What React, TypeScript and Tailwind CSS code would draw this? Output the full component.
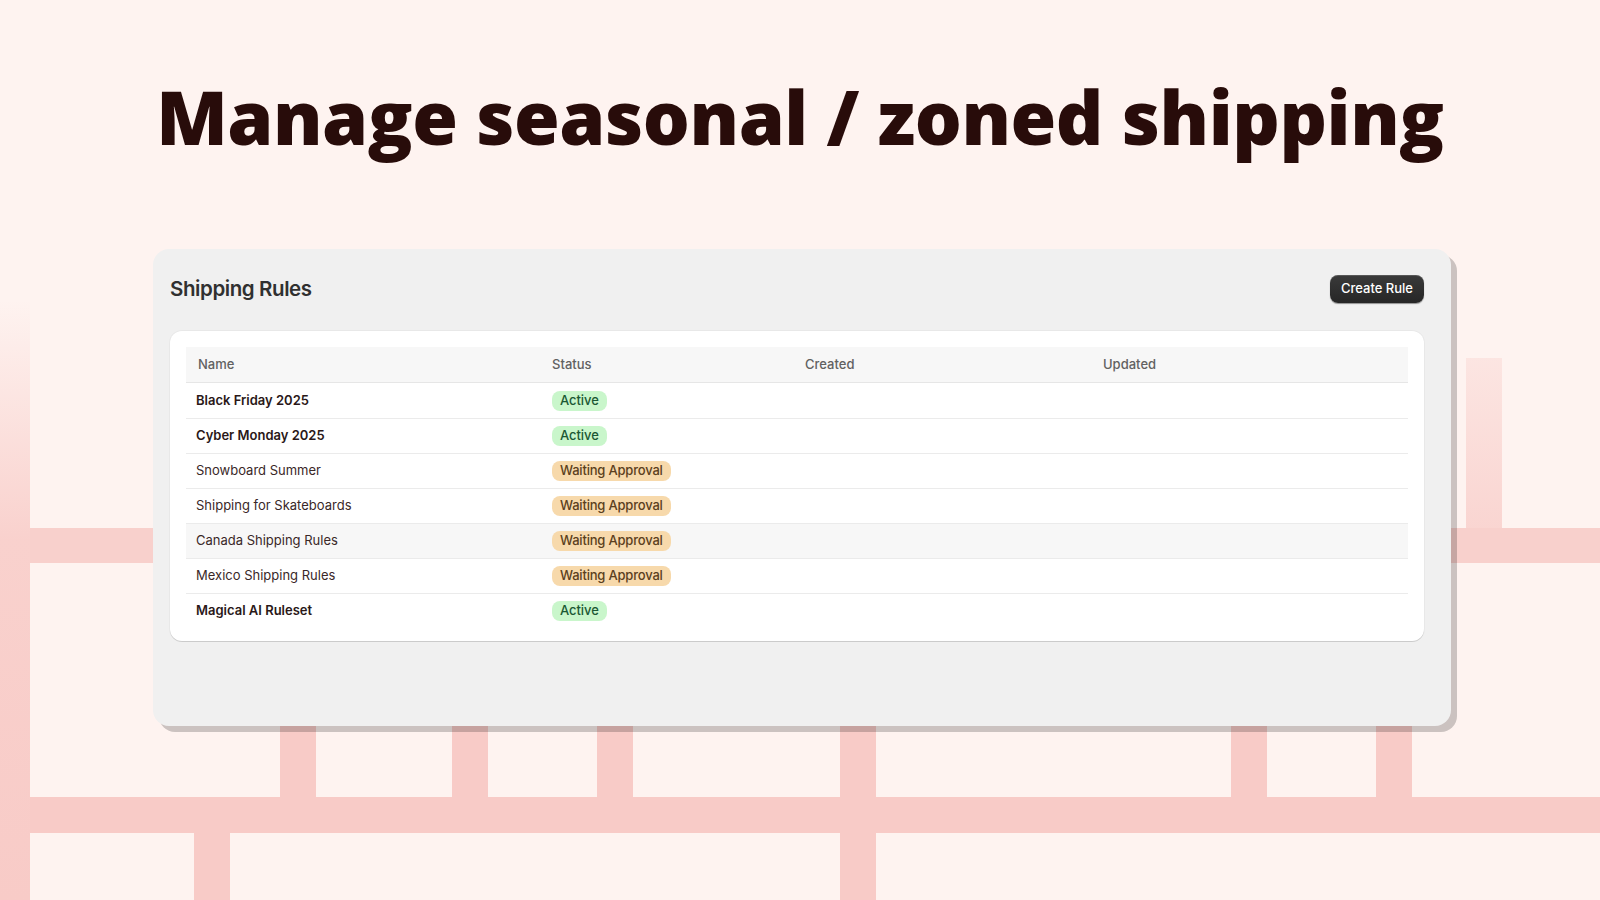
import React from "react";

type Rule = {
  name: string;
  status: "Active" | "Waiting Approval";
  bold?: boolean;
  hovered?: boolean;
};

const rules: Rule[] = [
  { name: "Black Friday 2025", status: "Active", bold: true },
  { name: "Cyber Monday 2025", status: "Active", bold: true },
  { name: "Snowboard Summer", status: "Waiting Approval" },
  { name: "Shipping for Skateboards", status: "Waiting Approval" },
  { name: "Canada Shipping Rules", status: "Waiting Approval", hovered: true },
  { name: "Mexico Shipping Rules", status: "Waiting Approval" },
  { name: "Magical AI Ruleset", status: "Active", bold: true },
];

// road-map looking stripes behind everything
function Backdrop() {
  const line = "#f8cbc7";
  const verticals = [280, 452, 597, 1231, 1376];
  return (
    <svg
      className="absolute inset-0"
      width="1600"
      height="900"
      viewBox="0 0 1600 900"
    >
      <defs>
        <linearGradient id="fadeLeft" x1="0" y1="0" x2="0" y2="1">
          <stop offset="0" stopColor={line} stopOpacity="0" />
          <stop offset="0.4" stopColor={line} stopOpacity="0.85" />
          <stop offset="1" stopColor={line} stopOpacity="1" />
        </linearGradient>
        <linearGradient id="fadeRight" x1="0" y1="0" x2="0" y2="1">
          <stop offset="0" stopColor={line} stopOpacity="0.35" />
          <stop offset="1" stopColor={line} stopOpacity="0.75" />
        </linearGradient>
      </defs>
      <rect x="0" y="300" width="30" height="600" fill="url(#fadeLeft)" />
      <rect x="30" y="528" width="1570" height="35" fill="#f8d0cc" />
      <rect x="1466" y="358" width="36" height="170" fill="url(#fadeRight)" />
      {verticals.map((x) => (
        <rect key={x} x={x} y="700" width="36" height="97" fill={line} />
      ))}
      <rect x="840" y="700" width="36" height="200" fill={line} />
      <rect x="30" y="797" width="1570" height="36" fill={line} />
      <rect x="194" y="833" width="36" height="67" fill={line} />
    </svg>
  );
}

function Badge({ status }: { status: Rule["status"] }) {
  const active = status === "Active";
  return (
    <span
      className={
        active
          ? "inline-flex h-5 items-center rounded-lg bg-[#c9f6cb] px-2 text-[13px] font-medium tracking-[-0.005em] text-[#1b5834]"
          : "inline-flex h-5 items-center rounded-lg bg-[#f7d9ab] px-2 text-[13px] font-medium tracking-[-0.015em] text-[#5b4020]"
      }
    >
      {status}
    </span>
  );
}

export default function App() {
  return (
    <div
      className="relative h-[900px] w-[1600px] overflow-hidden bg-[#fef3f0]"
      style={{ fontFamily: "Inter, 'Liberation Sans', sans-serif" }}
    >
      <Backdrop />
      <div className="relative flex flex-col">
        <h1
          className="pt-[80px] text-center text-[74px] font-extrabold leading-none tracking-[-0.006em] text-[#280c0a]"
          style={{ fontFamily: "'Open Sans', 'Liberation Sans', sans-serif" }}
        >
          Manage seasonal / zoned shipping
        </h1>

        <div className="mt-[95px] ml-[153px] h-[477px] w-[1298px] rounded-2xl bg-[#f0f0f0] pt-[26px] pl-[17px] pr-[27px] shadow-[6px_6px_0_rgba(0,0,0,0.2)]">
          <div className="flex h-7 items-center justify-between">
            <h2 className="text-[20.5px] font-semibold tracking-[-0.02em] text-[#303030]">
              Shipping Rules
            </h2>
            <button className="h-7 rounded-lg bg-gradient-to-b from-[#3a3a3a] to-[#262626] px-[11px] text-[13px] font-medium text-white shadow-[0_1px_1px_rgba(0,0,0,0.4),inset_0_1px_0_rgba(255,255,255,0.15)]">
              Create Rule
            </button>
          </div>

          <div className="mt-[28px] rounded-xl bg-white p-4 pb-[13px] shadow-[0_1px_0_rgba(0,0,0,0.12),0_0_0_1px_rgba(0,0,0,0.03)]">
            <div className="grid h-9 grid-cols-[354px_253px_298px_1fr] items-center border-b border-[#e6e6e6] bg-[#f7f7f7] text-[13px] font-medium text-[#616161]">
              <div className="pl-3">Name</div>
              <div className="pl-3">Status</div>
              <div className="pl-3">Created</div>
              <div className="pl-3">Updated</div>
            </div>
            {rules.map((rule, i) => (
              <div
                key={rule.name}
                className={
                  "grid h-[35px] grid-cols-[354px_253px_298px_1fr] items-center text-[13px] " +
                  (i > 0 ? "border-t border-[#ebebeb] " : "") +
                  (rule.hovered ? "bg-[#f7f7f7]" : "bg-white")
                }
              >
                <div
                  className={
                    rule.bold
                      ? "pl-[10px] font-semibold text-[#2a1818]"
                      : "pl-[10px] text-[#3a2828]"
                  }
                >
                  {rule.name}
                </div>
                <div className="pl-3">
                  <Badge status={rule.status} />
                </div>
                <div />
                <div />
              </div>
            ))}
          </div>
        </div>
      </div>
    </div>
  );
}
